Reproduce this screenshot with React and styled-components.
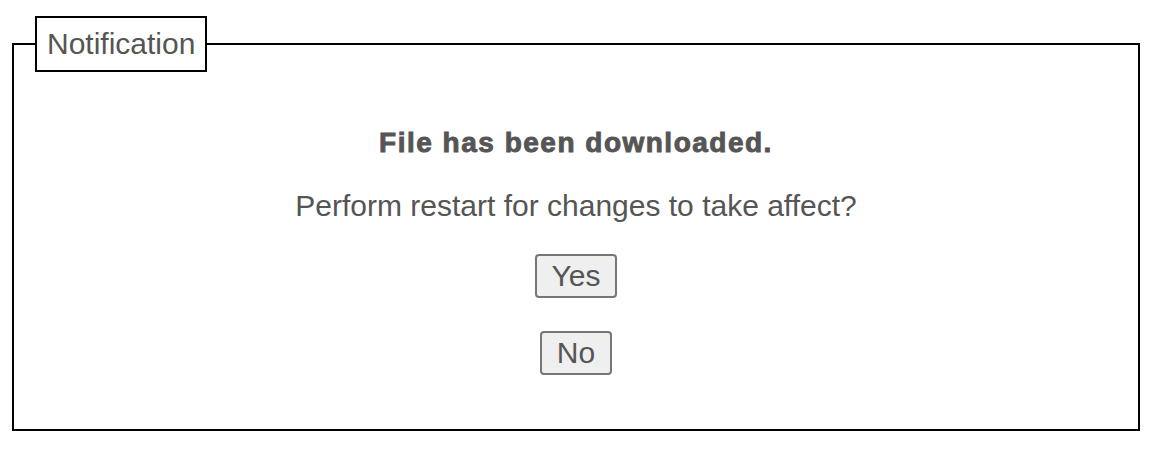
import React from 'react';
import styled, { createGlobalStyle } from 'styled-components';

const GlobalStyle = createGlobalStyle`
  body {
    margin: 0;
    background: #fff;
    font-family: "Liberation Sans", Arial, sans-serif;
  }
`;

const Page = styled.div`
  padding: 16px 16px 0 12px;
`;

const Box = styled.fieldset`
  box-sizing: border-box;
  width: 1128px;
  height: 415px;
  margin: 0;
  padding: 0 21px;
  border: 2px solid #000;
  display: flex;
  flex-direction: column;
  align-items: center;
`;

const Legend = styled.legend`
  padding: 10px 10px;
  border: 2px solid #000;
  font-size: 30px;
  line-height: 32px;
  color: #555;
`;

const Title = styled.p`
  margin: 55px 0 0;
  font-size: 28px;
  line-height: 32px;
  font-weight: 700;
  letter-spacing: 1.5px;
  -webkit-text-stroke: 0.9px #555;
  color: #555;
`;

const Question = styled.p`
  margin: 31px 0 0;
  font-size: 30px;
  line-height: 32px;
  color: #555;
`;

const Button = styled.button`
  box-sizing: border-box;
  height: 44px;
  margin-top: ${(p) => p.$gap}px;
  padding: 0 15px;
  border: 2px solid #767676;
  border-radius: 4px;
  background: #efefef;
  font-family: inherit;
  font-size: 30px;
  line-height: 32px;
  color: #555;
  cursor: pointer;
`;

const App = () => (
  <Page>
    <GlobalStyle />
    <Box>
      <Legend>Notification</Legend>
      <Title>File has been downloaded.</Title>
      <Question>Perform restart for changes to take affect?</Question>
      <Button $gap={32}>Yes</Button>
      <Button $gap={33}>No</Button>
    </Box>
  </Page>
);

export default App;
